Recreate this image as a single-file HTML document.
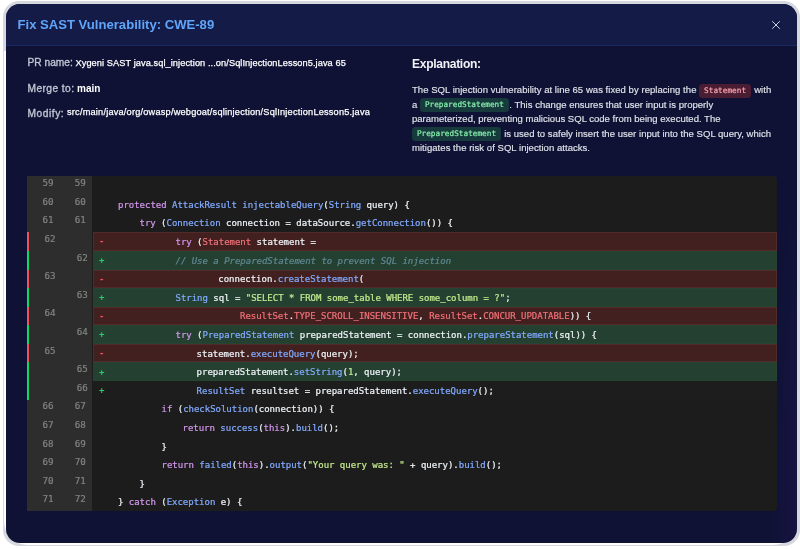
<!DOCTYPE html>
<html lang="en">
<head>
<meta charset="utf-8">
<title>Fix SAST Vulnerability: CWE-89</title>
<style>
html,body{margin:0;padding:0;background:#fff;}
body{width:800px;height:549px;overflow:hidden;position:relative;font-family:"Liberation Sans",Arial,sans-serif;}
.modal{position:absolute;left:6px;top:4px;width:791px;height:539px;border-radius:14px;background:radial-gradient(ellipse 26px 280px at 100% 88%, rgba(30,20,78,0.55), rgba(30,20,78,0) 100%),#0f1235;overflow:hidden;will-change:transform;}
.header{position:absolute;left:0;top:0;right:0;height:41px;background:#141b47;border-bottom:1.5px solid #1b2962;}
.title{position:absolute;left:11.5px;top:11px;font-size:13.1px;line-height:20px;font-weight:700;color:#60a5fa;white-space:nowrap;}
.close{position:absolute;left:765px;top:16px;width:10px;height:10px;}
.lbl{position:absolute;color:#c3c6d3;font-size:10.2px;line-height:14px;white-space:nowrap;-webkit-text-stroke:0.33px #c3c6d3;margin-top:0.7px;}
.val{position:absolute;color:#fff;font-size:9.2px;line-height:14px;white-space:nowrap;-webkit-text-stroke:0.25px #fff;margin-top:0.6px;}
.h2{position:absolute;left:406px;top:51.6px;font-size:12.1px;letter-spacing:-0.32px;line-height:16px;font-weight:700;color:#f1f2f6;white-space:nowrap;}
.pl{position:absolute;left:406px;color:#e1e3ea;font-size:9.53px;line-height:14px;white-space:nowrap;-webkit-text-stroke:0.15px #e1e3ea;}
.pill{display:inline-block;font-family:"DejaVu Sans Mono","Liberation Mono",monospace;font-size:7.7px;line-height:14px;height:14px;padding:0 4.9px;position:relative;top:-0.5px;border-radius:3.5px;vertical-align:0;margin:0 0.5px 0 0;-webkit-text-stroke:0.2px currentColor;}
.pill.g{background:#173a3c;color:#86efac;}
.pill.r{background:#4a1d33;color:#fda4af;top:0;}
.code{position:absolute;left:21px;top:172px;width:749.5px;height:335.2px;background:#1c1c1c;border-radius:0 3px 3px 0;overflow:hidden;font-family:"DejaVu Sans Mono","Liberation Mono",monospace;font-size:9px;}
.gut{position:absolute;left:0;top:0;bottom:0;width:64.5px;background:#2d2d2d;}
.row{position:absolute;left:0;right:0;height:18.6px;line-height:18.6px;}
.row .bar{position:absolute;left:0;top:0;bottom:0;width:2px;}
.row .bg{position:absolute;left:65.6px;right:0;top:0;bottom:0;box-sizing:border-box;}
.del .bar{background:#ee5260;}
.add .bar,.addx .bar{background:#14d663;}
.del .bg{background:#41201f;border:1px solid #532a2a;}
.add .bg{background:#244030;border:1px solid #274433;}
.addx .bg{background:#1d1d1d;}
.mk{position:absolute;left:72px;top:0;font-weight:700;}
.del .mk{color:#f0525c;}
.add .mk,.addx .mk{color:#22d063;}
.ln{position:absolute;top:-2.4px;color:#808580;font-size:9.2px;-webkit-text-stroke:0.2px #808580;}
.cd{position:absolute;top:0.6px;white-space:pre;color:#eef2f7;letter-spacing:-0.015px;-webkit-text-stroke:0.22px currentColor;}
.cd b{font-weight:400;}
.k{color:#d196ea;}
.c{color:#82aaff;}
.f{color:#82aaff;}
.s{color:#c3e88d;}
.n{color:#c3e88d;}
.r{color:#f07178;}
.m{color:#5f8893;font-style:italic;}
</style>
</head>
<body>
<div style="position:absolute;left:3px;top:1px;width:797px;height:545px;border-radius:16px;background:#d6d8e0"></div>
<div style="position:absolute;left:4px;top:51px;width:793px;height:494px;border-radius:0 0 24px 24px;background:#fff"></div>
<div class="modal">
  <div class="header">
    <div class="title">Fix SAST Vulnerability: CWE-89</div>
    <svg class="close" viewBox="0 0 10 10"><path d="M1.5 1.5 L8.5 8.5 M8.5 1.5 L1.5 8.5" stroke="#d0d4e2" stroke-width="1" fill="none" stroke-linecap="round"/></svg>
  </div>
  <div class="lbl" style="left:21.5px;top:51px">PR name:</div>
  <div class="val" style="left:69.5px;top:51px;letter-spacing:0.093px">Xygeni SAST java.sql_injection ...on/SqlInjectionLesson5.java 65</div>
  <div class="lbl" style="left:21.5px;top:77px;letter-spacing:0.44px">Merge to:</div>
  <div class="val" style="left:71px;top:77px;font-size:10px;font-weight:700;-webkit-text-stroke:0">main</div>
  <div class="lbl" style="left:21.5px;top:102.5px;letter-spacing:0.55px">Modify:</div>
  <div class="val" style="left:61px;top:100.6px;letter-spacing:0.21px">src/main/java/org/owasp/webgoat/sqlinjection/SqlInjectionLesson5.java</div>

  <div class="h2">Explanation:</div>
  <div class="pl" style="top:78.6px;letter-spacing:0.042px">The SQL injection vulnerability at line 65 was fixed by replacing the <span class="pill r">Statement</span> with</div>
  <div class="pl" style="top:93.6px;letter-spacing:0.02px">a <span class="pill g">PreparedStatement</span>. This change ensures that user input is properly</div>
  <div class="pl" style="top:108.3px;letter-spacing:0.01px">parameterized, preventing malicious SQL code from being executed. The</div>
  <div class="pl" style="top:122.9px;letter-spacing:0.03px"><span class="pill g">PreparedStatement</span> is used to safely insert the user input into the SQL query, which</div>
  <div class="pl" style="top:137.3px;letter-spacing:0.04px">mitigates the risk of SQL injection attacks.</div>

  <div class="code">
    <div class="gut"></div>
<div class="row" style="top:0px;height:19px"><span class="ln l1" style="left:15.4px;top:-1.9px">59</span><span class="ln l2" style="left:47.8px;top:-1.9px">59</span></div>
<div class="row" style="top:19px;height:19px"><span class="ln l1" style="left:15.4px;top:-2.3px">60</span><span class="ln l2" style="left:47.8px;top:-2.3px">60</span><span class="cd" style="left:91.0px;top:0.7px"><b class="k">protected</b> <b class="c">AttackResult</b> <b class="f">injectableQuery</b>(<b class="c">String</b> query) {</span></div>
<div class="row" style="top:38px;height:18px"><span class="ln l1" style="left:15.4px;top:-2.7px">61</span><span class="ln l2" style="left:47.8px;top:-2.7px">61</span><span class="cd" style="left:112.5px;top:0.3px"><b class="k">try</b> (<b class="c">Connection</b> connection = dataSource.<b class="f">getConnection</b>()) {</span></div>
<div class="row del" style="top:56px;height:19px"><i class="bar"></i><i class="bg"></i><span class="mk" style="top:0.3px">-</span><span class="ln l1" style="left:17.4px;top:-2.1px">62</span><span class="cd" style="left:148.5px;top:0.9px"><b class="k">try</b> (<b class="r">Statement</b> statement =</span></div>
<div class="row add" style="top:75px;height:19px"><i class="bar"></i><i class="bg"></i><span class="mk" style="top:-0.1px">+</span><span class="ln l2" style="left:49.8px;top:-2.5px">62</span><span class="cd" style="left:148.5px;top:0.5px"><b class="m">// Use a PreparedStatement to prevent SQL injection</b></span></div>
<div class="row del" style="top:94px;height:18px"><i class="bar"></i><i class="bg"></i><span class="mk" style="top:-0.5px">-</span><span class="ln l1" style="left:17.4px;top:-2.9px">63</span><span class="cd" style="left:191.3px;top:0.1px">connection.<b class="f">createStatement</b>(</span></div>
<div class="row add" style="top:112px;height:19px"><i class="bar"></i><i class="bg"></i><span class="mk" style="top:0.1px">+</span><span class="ln l2" style="left:49.8px;top:-2.3px">63</span><span class="cd" style="left:148.5px;top:0.7px"><b class="c">String</b> sql = <b class="s">"SELECT * FROM some_table WHERE some_column = ?"</b>;</span></div>
<div class="row del" style="top:131px;height:18px"><i class="bar"></i><i class="bg"></i><span class="mk" style="top:-0.3px">-</span><span class="ln l1" style="left:17.4px;top:-2.7px">64</span><span class="cd" style="left:213.0px;top:0.3px"><b class="r">ResultSet</b>.<b class="r">TYPE_SCROLL_INSENSITIVE</b>, <b class="r">ResultSet</b>.<b class="r">CONCUR_UPDATABLE</b>)) {</span></div>
<div class="row add" style="top:149px;height:19px"><i class="bar"></i><i class="bg"></i><span class="mk" style="top:0.3px">+</span><span class="ln l2" style="left:49.8px;top:-2.1px">64</span><span class="cd" style="left:148.5px;top:0.9px"><b class="k">try</b> (<b class="c">PreparedStatement</b> preparedStatement = connection.<b class="f">prepareStatement</b>(sql)) {</span></div>
<div class="row del" style="top:168px;height:18px"><i class="bar"></i><i class="bg"></i><span class="mk" style="top:-0.1px">-</span><span class="ln l1" style="left:17.4px;top:-2.5px">65</span><span class="cd" style="left:169.6px;top:0.5px">statement.<b class="f">executeQuery</b>(query);</span></div>
<div class="row add" style="top:186px;height:19px"><i class="bar"></i><i class="bg"></i><span class="mk" style="top:0.5px">+</span><span class="ln l2" style="left:49.8px;top:-1.9px">65</span><span class="cd" style="left:169.6px;top:1.1px">preparedStatement.<b class="f">setString</b>(<b class="n">1</b>, query);</span></div>
<div class="row addx" style="top:205px;height:19px"><i class="bar"></i><i class="bg"></i><span class="mk" style="top:0.1px">+</span><span class="ln l2" style="left:49.8px;top:-2.3px">66</span><span class="cd" style="left:169.6px;top:0.7px"><b class="c">ResultSet</b> resultset = preparedStatement.<b class="f">executeQuery</b>();</span></div>
<div class="row" style="top:224px;height:18px"><span class="ln l1" style="left:15.4px;top:-2.7px">66</span><span class="ln l2" style="left:47.8px;top:-2.7px">67</span><span class="cd" style="left:134.5px;top:0.3px"><b class="k">if</b> (<b class="f">checkSolution</b>(connection)) {</span></div>
<div class="row" style="top:242px;height:19px"><span class="ln l1" style="left:15.4px;top:-2.1px">67</span><span class="ln l2" style="left:47.8px;top:-2.1px">68</span><span class="cd" style="left:155.5px;top:0.9px"><b class="k">return</b> <b class="f">success</b>(<b class="k">this</b>).<b class="f">build</b>();</span></div>
<div class="row" style="top:261px;height:19px"><span class="ln l1" style="left:15.4px;top:-2.5px">68</span><span class="ln l2" style="left:47.8px;top:-2.5px">69</span><span class="cd" style="left:134.5px;top:0.5px">}</span></div>
<div class="row" style="top:280px;height:18px"><span class="ln l1" style="left:15.4px;top:-2.9px">69</span><span class="ln l2" style="left:47.8px;top:-2.9px">70</span><span class="cd" style="left:134.5px;top:0.1px"><b class="k">return</b> <b class="f">failed</b>(<b class="k">this</b>).<b class="f">output</b>(<b class="s">"Your query was: "</b> + query).<b class="f">build</b>();</span></div>
<div class="row" style="top:298px;height:19px"><span class="ln l1" style="left:15.4px;top:-2.3px">70</span><span class="ln l2" style="left:47.8px;top:-2.3px">71</span><span class="cd" style="left:112.5px;top:0.7px">}</span></div>
<div class="row" style="top:317px;height:18px"><span class="ln l1" style="left:15.4px;top:-2.7px">71</span><span class="ln l2" style="left:47.8px;top:-2.7px">72</span><span class="cd" style="left:91.0px;top:0.3px">} <b class="k">catch</b> (<b class="c">Exception</b> e) {</span></div>
  </div>
</div>
</body>
</html>
